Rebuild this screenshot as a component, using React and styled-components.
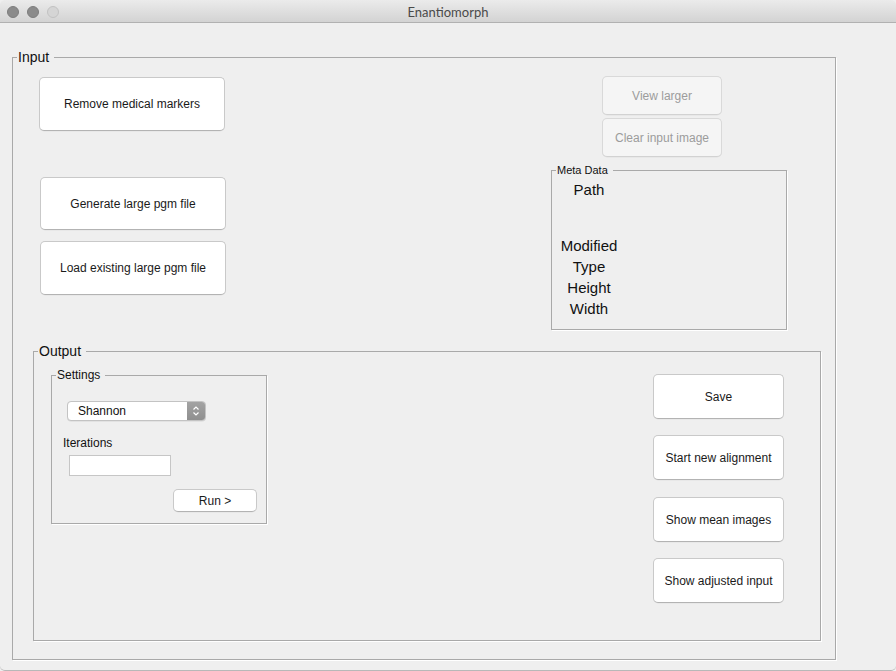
import React from "react";
import styled, { createGlobalStyle } from "styled-components";

const Global = createGlobalStyle`
  html, body { margin: 0; padding: 0; background: #efefef; }
  body { font-family: "Liberation Sans", Arial, sans-serif; color: #1a1a1a; }
  * { box-sizing: border-box; }
`;

const Window = styled.div`
  width: 896px;
  height: 671px;
  background: #efefef;
  display: flex;
  flex-direction: column;
  overflow: hidden;
  border-bottom: 1px solid #b8b8b8;
  border-radius: 5px 5px 5px 5px;
`;

const TitleBar = styled.div`
  height: 23px;
  flex: none;
  display: grid;
  grid-template-columns: 1fr auto 1fr;
  align-items: center;
  background: linear-gradient(#ebebeb, #d3d3d3);
  border-bottom: 1px solid #b1b1b1;
`;

const Lights = styled.div`
  display: flex;
  gap: 8px;
  padding-left: 7px;
  padding-top: 1px;
`;

const Light = styled.span`
  width: 12px;
  height: 12px;
  border-radius: 50%;
  background: ${(p) => (p.$off ? "#d5d5d5" : "#8b8b8b")};
  border: 1px solid ${(p) => (p.$off ? "#c2c2c2" : "#7d7d7d")};
`;

const Title = styled.div`
  font-family: "Lato", "Liberation Sans", sans-serif;
  font-size: 13px;
  color: #4a4a4a;
  padding-top: 1px;
`;

const Body = styled.div`
  flex: 1;
  padding: 26px 0 0 12px;
`;

const Group = styled.fieldset`
  margin: 0;
  padding: 0;
  min-width: 0;
  border: 1px solid #a9a9a9;
  box-shadow: 1px 1px 0 #ffffff;
  width: ${(p) => p.$w}px;
  margin-top: ${(p) => p.$mt || 0}px;
  margin-left: ${(p) => p.$ml || 0}px;
  padding-bottom: ${(p) => p.$pb || 0}px;
`;

const Legend = styled.legend`
  padding: 0 5px 0 1px;
  margin-left: 4px;
  font-size: ${(p) => p.$size}px;
  line-height: ${(p) => p.$size + 2}px;
  color: #111;
`;

const Row = styled.div`
  display: flex;
  align-items: flex-start;
`;

const Column = styled.div`
  display: flex;
  flex-direction: column;
  margin-top: ${(p) => p.$mt || 0}px;
  margin-left: ${(p) => p.$ml || 0}px;
  margin-right: ${(p) => p.$mr || 0}px;
`;

const Button = styled.button`
  font-family: "Liberation Sans", Arial, sans-serif;
  font-size: 12px;
  color: ${(p) => (p.disabled ? "#9c9c9c" : "#1a1a1a")};
  background: ${(p) => (p.disabled ? "#f5f5f5" : "#ffffff")};
  border: 1px solid ${(p) => (p.disabled ? "#d9d9d9" : "#c9c9c9")};
  border-bottom-color: ${(p) => (p.disabled ? "#d2d2d2" : "#b3b3b3")};
  border-radius: 5px;
  padding: 0;
  width: ${(p) => p.$w}px;
  height: ${(p) => p.$h}px;
  margin-top: ${(p) => p.$mt || 0}px;
  margin-left: ${(p) => p.$ml || 0}px;
  box-shadow: 0 0.5px 0.5px rgba(0, 0, 0, 0.06);
`;

const MetaList = styled.div`
  display: flex;
  flex-direction: column;
  width: 74px;
  padding-top: 2px;
`;

const MetaLabel = styled.div`
  font-size: 15px;
  line-height: 21px;
  text-align: center;
  color: #111;
  height: ${(p) => p.$h || 21}px;
`;

const Select = styled.div`
  display: flex;
  align-items: stretch;
  width: 139px;
  height: 20px;
  margin-top: 19px;
  margin-left: 15px;
  background: #fff;
  border: 1px solid #c3c3c3;
  border-radius: 4px;
  overflow: hidden;
  box-shadow: 0 0.5px 0.5px rgba(0, 0, 0, 0.1);
`;

const SelectText = styled.div`
  flex: 1;
  font-size: 12px;
  line-height: 18px;
  padding-left: 10px;
  color: #111;
`;

const Stepper = styled.div`
  width: 18px;
  display: flex;
  align-items: center;
  justify-content: center;
  background: linear-gradient(#a3a3a3, #8f8f8f);
`;

const FieldLabel = styled.div`
  font-size: 12px;
  line-height: 14px;
  margin-top: 15px;
  margin-left: 11px;
  color: #111;
`;

const TextBox = styled.div`
  width: 102px;
  height: 21px;
  margin-top: 5px;
  margin-left: 17px;
  background: #fff;
  border: 1px solid #c6c6c6;
`;

export default function App() {
  return (
    <>
      <Global />
      <Window>
        <TitleBar>
          <Lights>
            <Light />
            <Light />
            <Light $off />
          </Lights>
          <Title>Enantiomorph</Title>
          <div />
        </TitleBar>
        <Body>
          <Group $w={824} $pb={18}>
            <Legend $size={14}>Input</Legend>
            <Row>
              <Column $mt={12} $ml={26}>
                <Button $w={186} $h={54}>Remove medical markers</Button>
                <Button $w={186} $h={53} $mt={46} $ml={1}>Generate large pgm file</Button>
                <Button $w={186} $h={54} $mt={11} $ml={1}>Load existing large pgm file</Button>
              </Column>
              <Column $mt={11} $ml={325}>
                <Button disabled $w={120} $h={39} $ml={51}>View larger</Button>
                <Button disabled $w={120} $h={39} $mt={3} $ml={51}>Clear input image</Button>
                <Group $w={236} $mt={7} $pb={10}>
                  <Legend $size={11}>Meta Data</Legend>
                  <MetaList>
                    <MetaLabel $h={56}>Path</MetaLabel>
                    <MetaLabel>Modified</MetaLabel>
                    <MetaLabel>Type</MetaLabel>
                    <MetaLabel>Height</MetaLabel>
                    <MetaLabel>Width</MetaLabel>
                  </MetaList>
                </Group>
              </Column>
            </Row>
            <Group $w={788} $mt={13} $ml={20} $pb={37}>
              <Legend $size={14}>Output</Legend>
              <Row>
                <Group $w={216} $mt={9} $ml={17} $pb={11}>
                  <Legend $size={12}>Settings</Legend>
                  <Select>
                    <SelectText>Shannon</SelectText>
                    <Stepper>
                      <svg width="8" height="12" viewBox="0 0 8 12">
                        <path d="M1.5 4.5 L4 2 L6.5 4.5 M1.5 7.5 L4 10 L6.5 7.5" fill="none" stroke="#fff" strokeWidth="1.2" />
                      </svg>
                    </Stepper>
                  </Select>
                  <FieldLabel>Iterations</FieldLabel>
                  <TextBox />
                  <Button $w={84} $h={23} $mt={13} $ml={121}>Run &gt;</Button>
                </Group>
                <Column $mt={15} $ml={386}>
                  <Button $w={131} $h={45}>Save</Button>
                  <Button $w={131} $h={45} $mt={16}>Start new alignment</Button>
                  <Button $w={131} $h={45} $mt={17}>Show mean images</Button>
                  <Button $w={131} $h={45} $mt={16}>Show adjusted input</Button>
                </Column>
              </Row>
            </Group>
          </Group>
        </Body>
      </Window>
    </>
  );
}
